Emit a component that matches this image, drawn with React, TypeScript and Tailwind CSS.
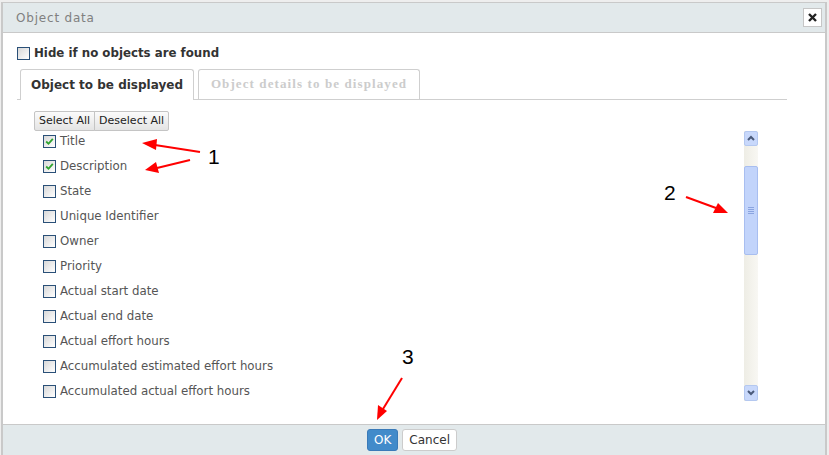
import React from "react";

const items: { label: string; checked: boolean }[] = [
  { label: "Title", checked: true },
  { label: "Description", checked: true },
  { label: "State", checked: false },
  { label: "Unique Identifier", checked: false },
  { label: "Owner", checked: false },
  { label: "Priority", checked: false },
  { label: "Actual start date", checked: false },
  { label: "Actual end date", checked: false },
  { label: "Actual effort hours", checked: false },
  { label: "Accumulated estimated effort hours", checked: false },
  { label: "Accumulated actual effort hours", checked: false },
];

function Box({ checked }: { checked?: boolean }) {
  return (
    <span className="relative inline-block h-[13px] w-[13px] shrink-0 border border-[#2a5078] bg-gradient-to-br from-[#d8d8d8] to-[#ffffff]">
      {checked && (
        <svg className="absolute left-[1px] top-[1px]" width="9" height="9" viewBox="0 0 9 9">
          <path d="M1.2 4.5 L3.5 6.8 L7.8 1.8" stroke="#2ea32e" strokeWidth="1.8" fill="none" />
        </svg>
      )}
    </span>
  );
}

export default function App() {
  const sans = { fontFamily: '"DejaVu Sans", Verdana, sans-serif' };
  return (
    <div className="relative h-[455px] w-[829px] overflow-hidden bg-[#eeeeee] pl-[1px] pr-[2px] pt-[2px]" style={sans}>
      <div className="flex h-[453px] flex-col border-x-2 border-t border-[#c9c9c9] bg-white">
        {/* title bar */}
        <div className="flex h-[30px] shrink-0 items-center justify-between border-b border-[#c9c9c9] bg-[#e2e9eb] pl-[13px] pr-[3px]">
          <span className="text-[12px] tracking-[0.8px] text-[#808080]">Object data</span>
          <button className="flex h-[19px] w-[19px] items-center justify-center border border-[#c6c6c6] bg-white">
            <svg width="9" height="9" viewBox="0 0 9 9">
              <path d="M1 1 L8 8 M8 1 L1 8" stroke="#222" strokeWidth="2.4" />
            </svg>
          </button>
        </div>

        {/* body */}
        <div className="flex flex-1 flex-col pl-[14px] pt-[12px]">
          <label className="flex items-center gap-[4px]">
            <Box />
            <span className="text-[11.8px] font-bold text-[#333]">Hide if no objects are found</span>
          </label>

          <div className="mt-[6px] flex w-[770px] items-end gap-[4px] border-b border-[#cfcfcf] pl-[3px]">
            <div className="-mb-px flex h-[31px] w-[174px] items-center justify-center rounded-t-[3px] border border-b-0 border-[#cfcfcf] bg-white text-[12px] font-bold text-[#333]">
              Object to be displayed
            </div>
            <div
              className="flex h-[30px] w-[222px] items-center justify-center rounded-t-[3px] border border-b-0 border-[#cfcfcf] bg-white text-[13px] font-bold tracking-[1.1px] text-[#cccccc]"
              style={{ fontFamily: '"Liberation Serif", serif' }}
            >
              Object details to be displayed
            </div>
          </div>

          <div className="mt-[11px] flex w-[741px] pl-[17px]">
            <div className="flex flex-1 flex-col">
              <div className="flex self-start text-[11px] text-[#222]">
                <button className="h-[20px] rounded-l-[2px] border border-[#c4c4c4] bg-gradient-to-b from-[#fbfbfb] to-[#e4e4e4] px-[4px] leading-[18px]">Select All</button>
                <button className="-ml-px h-[20px] rounded-r-[2px] border border-[#c4c4c4] bg-gradient-to-b from-[#fbfbfb] to-[#e4e4e4] px-[4px] leading-[18px]">Deselect All</button>
              </div>
              <div className="flex flex-col gap-[7px] pl-[9px] pt-[2px]">
                {items.map((it) => (
                  <div key={it.label} className="flex h-[18px] items-center gap-[4px]">
                    <Box checked={it.checked} />
                    <span className="text-[11.8px] text-[#555]">{it.label}</span>
                  </div>
                ))}
              </div>
            </div>

            {/* scrollbar */}
            <div className="mt-[20px] flex h-[270px] w-[14px] flex-col items-center bg-gradient-to-r from-[#eeede5] to-[#f8f7f3]">
              <div className="flex h-[15px] w-[14px] items-center justify-center rounded-[2px] border border-[#b4c8f0] bg-[#c8d8fb]">
                <svg width="8" height="6" viewBox="0 0 8 6"><path d="M1 5 L4 2 L7 5" stroke="#4a5a7a" strokeWidth="2" fill="none" /></svg>
              </div>
              <div className="mt-[20px] flex h-[89px] w-[14px] flex-col items-center justify-center gap-[1px] rounded-[2px] border border-[#a8bef0] bg-[#c2d4fb]">
                <span className="h-px w-[6px] bg-[#8aa4e0]" />
                <span className="h-px w-[6px] bg-[#8aa4e0]" />
                <span className="h-px w-[6px] bg-[#8aa4e0]" />
                <span className="h-px w-[6px] bg-[#8aa4e0]" />
              </div>
              <div className="flex-1" />
              <div className="flex h-[16px] w-[14px] items-center justify-center rounded-[2px] border border-[#b4c8f0] bg-[#c8d8fb]">
                <svg width="8" height="6" viewBox="0 0 8 6"><path d="M1 1 L4 4 L7 1" stroke="#4a5a7a" strokeWidth="2" fill="none" /></svg>
              </div>
            </div>
          </div>
        </div>

        {/* footer */}
        <div className="flex h-[31px] shrink-0 items-center justify-center gap-[4px] border-t border-[#c9c9c9] bg-[#e2e9eb] pr-[4px]">
          <button className="h-[22px] rounded-[3px] border border-[#3a7ab8] bg-[#428bca] px-[6px] text-[12px] text-white">OK</button>
          <button className="h-[22px] rounded-[3px] border border-[#cccccc] bg-white px-[6px] text-[12px] text-[#333]">Cancel</button>
        </div>
      </div>

      {/* annotations */}
      <svg className="pointer-events-none absolute left-0 top-0" width="829" height="455">
        <g stroke="#ff0000" strokeWidth="2" fill="#ff0000">
          <line x1="200" y1="152" x2="155" y2="145" />
          <polygon points="142,143 157,139 156,150" stroke="none" />
          <line x1="190" y1="160" x2="157" y2="168" />
          <polygon points="145,170 156,162 159,173" stroke="none" />
          <line x1="686" y1="197" x2="716" y2="208" />
          <polygon points="728,213 713,213 718,203" stroke="none" />
          <line x1="402" y1="378" x2="383" y2="409" />
          <polygon points="377,420 378,405 387,411" stroke="none" />
        </g>
        <g fill="#000" fontFamily="Liberation Sans, Arial, sans-serif" fontSize="21">
          <text x="208" y="164">1</text>
          <text x="664" y="200">2</text>
          <text x="402" y="364">3</text>
        </g>
      </svg>
    </div>
  );
}
